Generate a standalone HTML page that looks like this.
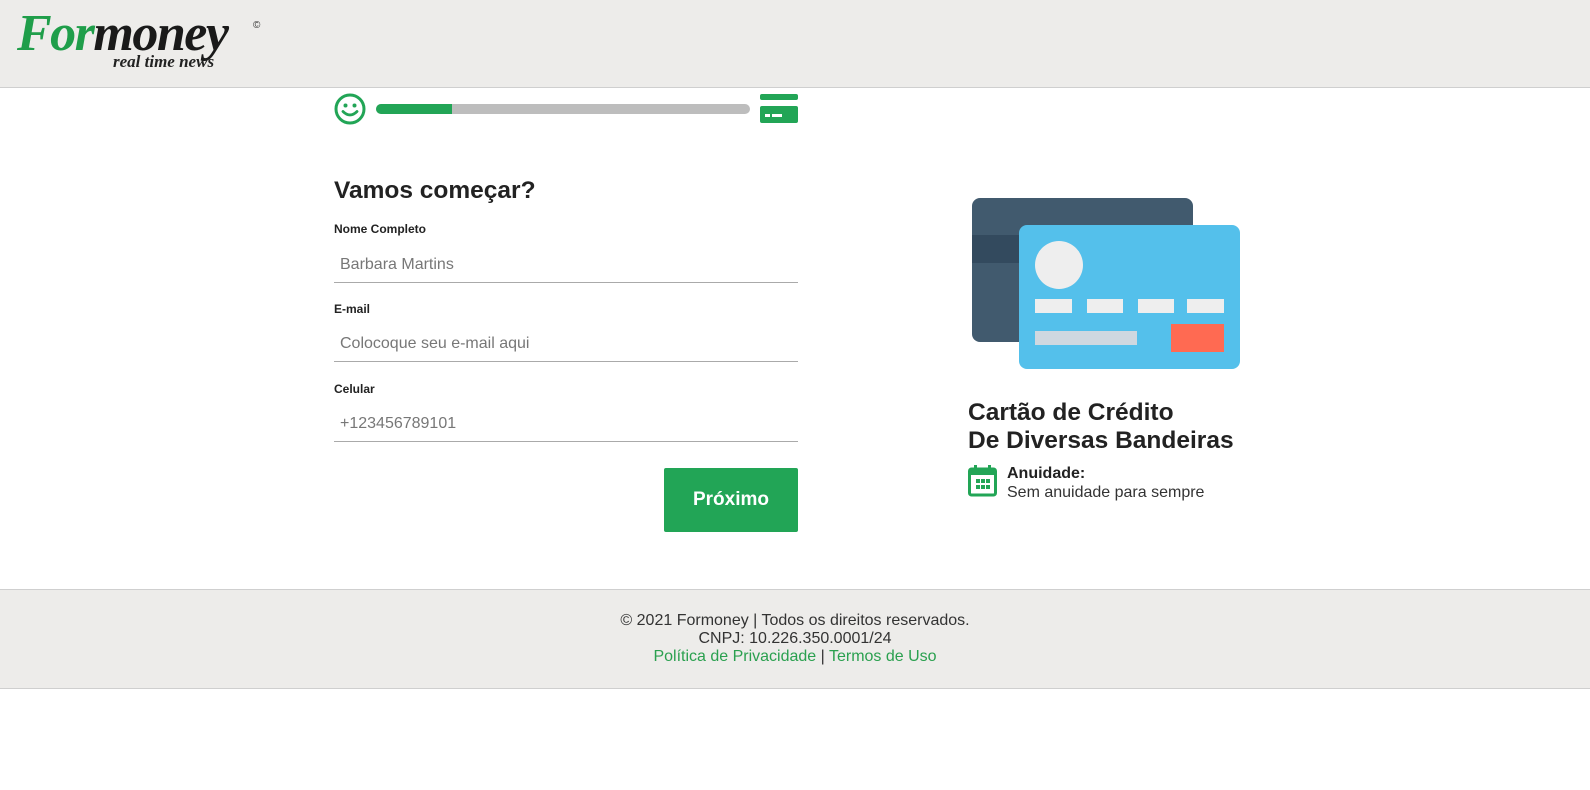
<!DOCTYPE html>
<html><head><meta charset="utf-8"><style>
*{margin:0;padding:0;box-sizing:border-box}
body{width:1590px;height:790px;background:#fff;font-family:"Liberation Sans",Arial,sans-serif;position:relative;overflow:hidden;color:#222}
.hdr{position:absolute;left:0;top:0;width:1590px;height:88px;background:#edecea;border-bottom:1px solid #cfcfcf}
.logo{position:absolute;left:17px;top:4px;font-family:"Liberation Serif",serif;font-style:italic;font-weight:bold;font-size:52px;letter-spacing:-1.5px}
.logo .g{color:#1f9e4a}.logo .b{color:#1a1a1a}
.tag{position:absolute;left:113px;top:52px;font-family:"Liberation Serif",serif;font-style:italic;font-weight:bold;font-size:17px;color:#222}
.abs{position:absolute}
label{position:absolute;font-size:12px;font-weight:bold;color:#222}
.inp{position:absolute;left:334px;width:464px;height:40px;border-bottom:1px solid #aaa;font-size:16px;color:#777;padding:13px 0 0 6px}
.btn{position:absolute;left:664px;top:468px;width:134px;height:64px;background:#22a556;color:#fff;font-weight:bold;font-size:19px;text-align:center;line-height:64px;border-radius:2px}
.ftr{position:absolute;left:0;top:589px;width:1590px;height:100px;background:#edecea;border-top:1px solid #cfcfcf;border-bottom:1px solid #cfcfcf;text-align:center;font-size:16px;color:#333;padding-top:22px;line-height:18px}
.ftr a{color:#2aa04f;text-decoration:none}
</style></head><body>
<div class="hdr">
<div class="logo"><span class="g">For</span><span class="b">money</span></div>
<div class="abs" style="left:253px;top:20px;font-size:10px;color:#333">©</div>
<div class="tag">real time news</div>
</div>
<svg class="abs" style="left:334px;top:93px" width="34" height="34" viewBox="0 0 34 34"><circle cx="16" cy="16" r="14" fill="none" stroke="#22a556" stroke-width="3"/><circle cx="11.5" cy="12.5" r="2" fill="#22a556"/><circle cx="20.5" cy="12.5" r="2" fill="#22a556"/><path d="M9 18.5q7 7 14 0" fill="none" stroke="#22a556" stroke-width="2.8" stroke-linecap="round"/></svg>
<div class="abs" style="left:376px;top:104px;width:374px;height:10px;border-radius:5px;background:#bdbdbd"></div>
<div class="abs" style="left:376px;top:104px;width:76px;height:10px;border-radius:5px 0 0 5px;background:#22a556"></div>
<svg class="abs" style="left:760px;top:94px" width="38" height="30"><rect x="0" y="0" width="38" height="6" rx="2" fill="#22a556"/><rect x="0" y="12" width="38" height="17" rx="2" fill="#22a556"/><rect x="5" y="20" width="5" height="3" fill="#fff"/><rect x="12" y="20" width="10" height="3" fill="#fff"/></svg>
<div class="abs" style="left:334px;top:177px;font-size:24.5px;font-weight:bold;color:#222">Vamos começar?</div>
<label style="left:334px;top:222px">Nome Completo</label>
<div class="inp" style="top:243px">Barbara Martins</div>
<label style="left:334px;top:302px">E-mail</label>
<div class="inp" style="top:322px">Colocoque seu e-mail aqui</div>
<label style="left:334px;top:382px">Celular</label>
<div class="inp" style="top:402px">+123456789101</div>
<div class="btn">Próximo</div>
<svg class="abs" style="left:972px;top:198px" width="270" height="172">
<rect x="0" y="0" width="221" height="144" rx="8" fill="#415a6e"/>
<rect x="0" y="37" width="60" height="28" fill="#334a5e"/>
<rect x="47" y="27" width="221" height="144" rx="8" fill="#54c0eb"/>
<circle cx="87" cy="67" r="24" fill="#eeeeee"/>
<rect x="63" y="101" width="37" height="14" fill="#eeeeee"/>
<rect x="115" y="101" width="36" height="14" fill="#eeeeee"/>
<rect x="166" y="101" width="36" height="14" fill="#eeeeee"/>
<rect x="215" y="101" width="37" height="14" fill="#eeeeee"/>
<rect x="63" y="133" width="102" height="14" fill="#cfd8e0"/>
<rect x="199" y="126" width="53" height="28" fill="#ff6a52"/>
</svg>
<div class="abs" style="left:968px;top:399px;font-size:24.5px;font-weight:bold;line-height:28px;color:#222">Cartão de Crédito<br>De Diversas Bandeiras</div>
<svg class="abs" style="left:968px;top:464px" width="30" height="34"><rect x="1.5" y="5" width="26" height="26" rx="2" fill="none" stroke="#22a556" stroke-width="3"/><rect x="1.5" y="5" width="26" height="6" fill="#22a556"/><rect x="6" y="1" width="3" height="6" fill="#22a556"/><rect x="20" y="1" width="3" height="6" fill="#22a556"/><g fill="#22a556"><rect x="8" y="15" width="4" height="4"/><rect x="13" y="15" width="4" height="4"/><rect x="18" y="15" width="4" height="4"/><rect x="8" y="21" width="4" height="4"/><rect x="13" y="21" width="4" height="4"/><rect x="18" y="21" width="4" height="4"/></g></svg>
<div class="abs" style="left:1007px;top:465px;font-size:16px;font-weight:bold;color:#222">Anuidade:</div>
<div class="abs" style="left:1007px;top:484px;font-size:16px;color:#333">Sem anuidade para sempre</div>
<div class="ftr">© 2021 Formoney | Todos os direitos reservados.<br>CNPJ: 10.226.350.0001/24<br><a>Política de Privacidade</a> | <a>Termos de Uso</a></div>
</body></html>
